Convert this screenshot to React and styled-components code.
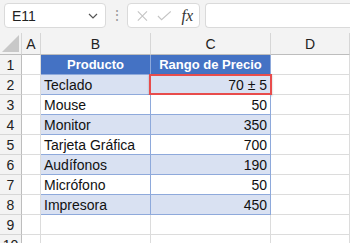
import React from 'react'
import styled, { createGlobalStyle } from 'styled-components'

const GlobalStyle = createGlobalStyle`
    body{
        margin: 0;
        background: #fff;
        font-family: "Liberation Sans", Arial, sans-serif;
    }
`

const rows = [
    ['Teclado', '70 ± 5'],
    ['Mouse', '50'],
    ['Monitor', '350'],
    ['Tarjeta Gráfica', '700'],
    ['Audífonos', '190'],
    ['Micrófono', '50'],
    ['Impresora', '450'],
]

function App() {
    return (
        <Page>
            <GlobalStyle />
            <Toolbar>
                <NameBox>
                    <span>E11</span>
                    <svg width="10" height="6" viewBox="0 0 10 6">
                        <path d="M1 1l4 4 4-4" fill="none" stroke="#555" strokeWidth="1.2" />
                    </svg>
                </NameBox>
                <Dots>⋮</Dots>
                <FxBox>
                    <svg width="14" height="14" viewBox="0 0 14 14">
                        <path d="M2 2l10 10M12 2L2 12" stroke="#c4c4c4" strokeWidth="1.2" />
                    </svg>
                    <svg width="16" height="14" viewBox="0 0 16 14">
                        <path d="M1 7l4 4 10-9" fill="none" stroke="#c4c4c4" strokeWidth="1.2" />
                    </svg>
                    <Fx>fx</Fx>
                </FxBox>
                <FormulaInput />
            </Toolbar>
            <Sheet>
                <Corner><svg width="17" height="17" viewBox="0 0 17 17"><path d="M17 0v17H0z" fill="#c8c8c8" /></svg></Corner>
                <ColHead>A</ColHead>
                <ColHead>B</ColHead>
                <ColHead>C</ColHead>
                <ColHead>D</ColHead>

                <RowHead>1</RowHead>
                <Cell />
                <HeadCell>Producto</HeadCell>
                <HeadCell>Rango de Precio</HeadCell>
                <Cell />

                {rows.map(([name, price], i) => (
                    <React.Fragment key={name}>
                        <RowHead>{i + 2}</RowHead>
                        <Cell />
                        <DataCell $band={i % 2 === 0}>{name}</DataCell>
                        <DataCell $band={i % 2 === 0} $right $selected={i === 0}>{price}</DataCell>
                        <Cell />
                    </React.Fragment>
                ))}

                {[9, 10].map(n => (
                    <React.Fragment key={n}>
                        <RowHead>{n}</RowHead>
                        <Cell />
                        <Cell />
                        <Cell />
                        <Cell />
                    </React.Fragment>
                ))}
            </Sheet>
        </Page>
    )
}

const Page = styled.div`
    width: 350px;
    height: 243px;
    overflow: hidden;
    background: #fff;
`

const Toolbar = styled.div`
    height: 33px;
    background: #f3f3f3;
    display: flex;
    align-items: flex-start;
    padding-top: 3px;
    padding-left: 4px;
    box-sizing: border-box;
`

const Box = styled.div`
    height: 25px;
    box-sizing: border-box;
    background: #fff;
    border: 1px solid #dadada;
    border-radius: 4px;
    display: flex;
    align-items: center;
`

const NameBox = styled(Box)`
    width: 102px;
    padding: 0 7px 0 7px;
    justify-content: space-between;
    font-size: 14px;
    color: #222;
`

const Dots = styled.div`
    width: 21px;
    text-align: center;
    color: #999;
    font-size: 14px;
    line-height: 25px;
`

const FxBox = styled(Box)`
    width: 73px;
    padding: 0 6px 0 8px;
    gap: 8px;
`

const Fx = styled.span`
    font-family: "Liberation Serif", serif;
    font-style: italic;
    font-size: 16px;
    color: #333;
    margin-left: 2px;
`

const FormulaInput = styled(Box)`
    margin-left: 5px;
    flex: 1;
    border-right: none;
    border-radius: 4px 0 0 4px;
`

const Sheet = styled.div`
    display: grid;
    grid-template-columns: 22px 19px 110px 120px 79px;
    grid-template-rows: 22px repeat(10, 20px);
    font-size: 14px;
`

const Corner = styled.div`
    background: #f3f3f3;
    border-right: 1px solid #d6d6d6;
    border-bottom: 1px solid #bdbdbd;
    display: flex;
    align-items: flex-end;
    justify-content: flex-end;
    padding: 0 2px 2px 0;
    box-sizing: border-box;
`

const ColHead = styled.div`
    background: #f3f3f3;
    border-right: 1px solid #d6d6d6;
    border-bottom: 1px solid #bdbdbd;
    box-sizing: border-box;
    display: flex;
    align-items: center;
    justify-content: center;
    color: #222;
    font-size: 14px;
`

const RowHead = styled.div`
    background: #f3f3f3;
    border-right: 1px solid #bdbdbd;
    border-bottom: 1px solid #d6d6d6;
    box-sizing: border-box;
    display: flex;
    align-items: center;
    justify-content: center;
    color: #222;
`

const Cell = styled.div`
    border-right: 1px solid #dcdcdc;
    border-bottom: 1px solid #dcdcdc;
    box-sizing: border-box;
`

const HeadCell = styled.div`
    background: #4472c4;
    color: #fff;
    font-weight: bold;
    font-size: 13px;
    display: flex;
    align-items: center;
    justify-content: center;
    border-right: 1px solid #8ea9db;
    border-bottom: 1px solid #8ea9db;
    box-sizing: border-box;
`

const DataCell = styled.div`
    position: relative;
    background: ${p => (p.$band ? '#d9e1f2' : '#fff')};
    color: #111;
    display: flex;
    align-items: center;
    justify-content: ${p => (p.$right ? 'flex-end' : 'flex-start')};
    padding: 0 3px;
    border-right: 1px solid #8ea9db;
    border-bottom: 1px solid #8ea9db;
    box-sizing: border-box;
    white-space: nowrap;
    &::after{
        content: '';
        display: ${p => (p.$selected ? 'block' : 'none')};
        position: absolute;
        left: -2px;
        top: -1px;
        right: -2px;
        bottom: -1px;
        border: 2px solid #e84c4c;
        box-shadow: 0 1px 2px rgba(0,0,0,0.25);
    }
`

export default App
